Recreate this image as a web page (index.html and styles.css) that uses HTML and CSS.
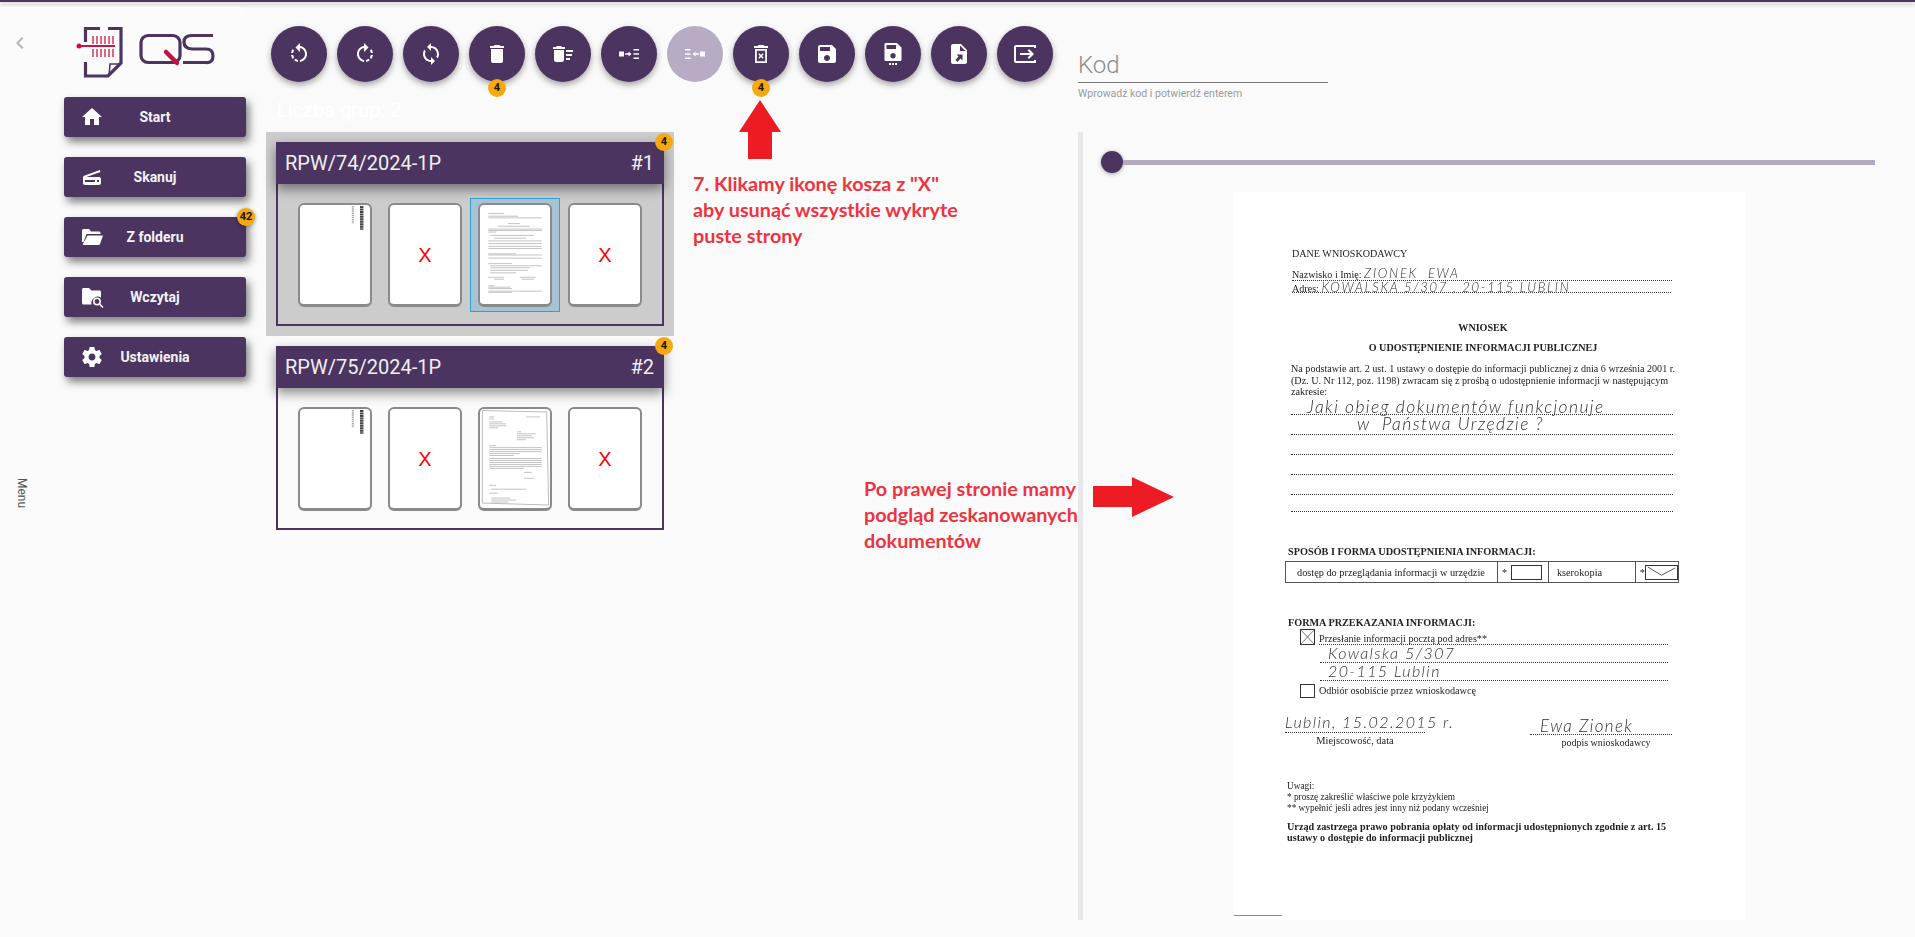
FILE: index.html
```html
<!DOCTYPE html>
<html lang="pl">

<head>
    <meta charset="UTF-8">
    <title>QS</title>
    <link rel="stylesheet" href="styles.css">
</head>

<body>
    <div class="topbar"></div>

    <div class="app">
        <!-- left menu -->
        <aside class="sidebar">
            <div class="rail">
                <svg class="chevron" viewBox="0 0 24 24"><path d="M15.41 7.41L14 6l-6 6 6 6 1.41-1.41L10.83 12z"/></svg>
                <span class="menu-label">Menu</span>
            </div>
            <div class="side-main">
                <svg class="logo" viewBox="0 0 140 52">
                    <path class="logo-line" d="M24 2.500H9.500V16M9.500 36V50H32L45 37V2.500H32"/>
                    <path class="logo-line thin" d="M33 50L34 38H45"/>
                    <path class="logo-red" d="M2 20H39"/>
                    <circle class="logo-dot" cx="3" cy="20" r="2.500"/>
                    <path class="logo-stripes" d="M17 10V18M21 10V18M25 10V18M29 10V18M33 10V18M37 10V18M17 23V31M21 23V31M25 23V31M29 23V31M33 23V31M37 23V31"/>
                    <rect class="logo-line" x="65" y="9.500" width="39" height="27" rx="7"/>
                    <path class="logo-line" d="M137 9.500H116Q108 9.500 108 16T116 23H130Q137 23 137 30T130 36.500H107"/>
                    <path class="logo-slash" d="M90 26L101 37"/>
                </svg>
                <nav class="nav">
                    <a class="nav-btn">
                        <svg class="nav-icon" viewBox="0 0 24 24"><path d="M10 20v-6h4v6h5v-8h3L12 3 2 12h3v8z"/></svg>
                        <span>Start</span>
                    </a>
                    <a class="nav-btn">
                        <svg class="nav-icon flip" viewBox="0 0 24 24"><path d="M19.800 10.700L4.200 5l-.7 1.900L17.600 12H5c-1.100 0-2 .9-2 2v4c0 1.100.9 2 2 2h14c1.100 0 2-.9 2-2v-5.500c0-.8-.5-1.600-1.200-1.800zM7 17H5v-2h2v2zm12 0H9v-2h10v2z"/></svg>
                        <span>Skanuj</span>
                    </a>
                    <a class="nav-btn">
                        <svg class="nav-icon" viewBox="0 0 24 24"><path d="M2 5.500C2 4.700 2.700 4 3.500 4H9l2 2.500h8c.8 0 1.500.7 1.500 1.500v1H6.500L3.500 17H2z"/><path d="M7.500 10.500H23l-3 8.500c-.2.600-.7 1-1.400 1H3.500c-.5 0-.8-.4-.6-.9z"/></svg>
                        <span>Z folderu</span>
                    </a>
                    <a class="nav-btn">
                        <svg class="nav-icon" viewBox="0 0 24 24"><path d="M3.500 3H9l2.500 2.500h8c.9 0 1.500.7 1.500 1.500v5.500a6.500 6.500 0 0 0-9.500 7H3.500c-.9 0-1.500-.7-1.500-1.500V4.500C2 3.700 2.600 3 3.500 3z"/><circle class="lens" cx="17" cy="16.500" r="3.200"/><path class="lens" d="M19.500 19l3.500 3.500"/></svg>
                        <span>Wczytaj</span>
                    </a>
                    <a class="nav-btn">
                        <svg class="nav-icon" viewBox="0 0 24 24"><path d="M19.430 12.980c.04-.32.07-.64.07-.98s-.03-.66-.07-.98l2.110-1.650c.19-.15.24-.42.12-.64l-2-3.460c-.12-.22-.39-.3-.61-.22l-2.490 1c-.52-.4-1.080-.73-1.690-.98l-.38-2.650C14.460 2.180 14.250 2 14 2h-4c-.25 0-.46.18-.49.42l-.38 2.650c-.61.25-1.170.59-1.690.98l-2.490-1c-.23-.09-.49 0-.61.22l-2 3.460c-.13.22-.07.49.12.64l2.110 1.650c-.04.32-.07.65-.07.98s.03.66.07.98l-2.110 1.650c-.19.15-.24.42-.12.64l2 3.460c.12.22.39.3.61.22l2.490-1c.52.4 1.080.73 1.690.98l.38 2.650c.03.24.24.42.49.42h4c.25 0 .46-.18.49-.42l.38-2.650c.61-.25 1.170-.59 1.690-.98l2.490 1c.23.09.49 0 .61-.22l2-3.460c.12-.22.07-.49-.12-.64l-2.110-1.650zM12 15.500c-1.930 0-3.500-1.570-3.500-3.500s1.570-3.500 3.500-3.500 3.500 1.570 3.500 3.500-1.570 3.500-3.500 3.500z"/></svg>
                        <span>Ustawienia</span>
                    </a>
                    <span class="badge badge-nav">42</span>
                </nav>
            </div>
        </aside>

        <main class="main">
            <!-- toolbar -->
            <div class="toolbar">
                <button class="fab"><svg viewBox="0 0 24 24"><path d="M7.110 8.530L5.700 7.110C4.800 8.270 4.240 9.610 4.070 11h2.020c.14-.87.49-1.720 1.020-2.470zM6.090 13H4.070c.17 1.390.72 2.730 1.620 3.890l1.410-1.420c-.52-.75-.87-1.590-1.010-2.470zm1.010 5.320c1.160.9 2.510 1.440 3.900 1.610V17.900c-.87-.15-1.710-.49-2.460-1.030L7.100 18.320zM13 4.070V1L8.450 5.550 13 10V6.090c2.840.48 5 2.940 5 5.910s-2.160 5.430-5 5.910v2.020c3.950-.49 7-3.850 7-7.930s-3.050-7.440-7-7.930z"/></svg></button>
                <button class="fab"><svg viewBox="0 0 24 24"><path d="M15.550 5.550L11 1v3.070C7.060 4.560 4 7.920 4 12s3.050 7.440 7 7.930v-2.020c-2.840-.48-5-2.940-5-5.910s2.160-5.430 5-5.910V10l4.550-4.450zM19.930 11c-.17-1.390-.72-2.730-1.620-3.890l-1.420 1.420c.54.75.88 1.600 1.020 2.470h2.020zM13 17.900v2.020c1.390-.17 2.740-.71 3.900-1.610l-1.440-1.440c-.75.54-1.590.89-2.460 1.030zm3.890-2.420l1.420 1.410c.9-1.160 1.450-2.500 1.620-3.890h-2.020c-.14.870-.48 1.720-1.020 2.480z"/></svg></button>
                <button class="fab"><svg viewBox="0 0 24 24"><path d="M12 4V1L8 5l4 4V6c3.310 0 6 2.690 6 6 0 1.010-.25 1.970-.7 2.800l1.460 1.460C19.540 15.030 20 13.570 20 12c0-4.420-3.580-8-8-8zm0 14c-3.310 0-6-2.690-6-6 0-1.010.25-1.970.7-2.800L5.240 7.740C4.460 8.970 4 10.430 4 12c0 4.420 3.580 8 8 8v3l4-4-4-4v3z"/></svg></button>
                <button class="fab"><svg viewBox="0 0 24 24"><path d="M6 19c0 1.100.9 2 2 2h8c1.100 0 2-.9 2-2V7H6v12zM19 4h-3.500l-1-1h-5l-1 1H5v2h14V4z"/></svg><span class="badge badge-fab">4</span></button>
                <button class="fab"><svg viewBox="0 0 24 24"><path d="M15 16h4v2h-4zm0-8h7v2h-7zm0 4h6v2h-6zM3 18c0 1.100.9 2 2 2h6c1.100 0 2-.9 2-2V8H3v10zM14 5h-3l-1-1H6L5 5H2v2h12z"/></svg></button>
                <button class="fab"><svg viewBox="0 0 24 24"><path d="M2 9.500h5v5H2zM8 11.300h3.500V9.500l3 2.500-3 2.500v-1.800H8zM16.500 7H22v1.600h-5.500zM16.500 11.200H22v1.600h-5.500zM16.500 15.400H22V17h-5.500z"/></svg></button>
                <button class="fab fab-off"><svg class="flip" viewBox="0 0 24 24"><path d="M2 9.500h5v5H2zM8 11.300h3.500V9.500l3 2.500-3 2.500v-1.800H8zM16.500 7H22v1.600h-5.500zM16.500 11.200H22v1.600h-5.500zM16.500 15.400H22V17h-5.500z"/></svg></button>
                <button class="fab"><svg viewBox="0 0 24 24"><path fill-rule="evenodd" d="M6 7h12v14H6zM7.800 8.800v10.400h8.400V8.800zM19 4h-3.500l-1-1h-5l-1 1H5v2h14z"/><path d="M9.300 10.800l1.100-1.100 1.600 1.700 1.600-1.700 1.100 1.100-1.600 1.700 1.600 1.700-1.100 1.100-1.600-1.700-1.600 1.700-1.100-1.100 1.600-1.700z" transform="translate(0 1.500)"/></svg><span class="badge badge-fab">4</span></button>
                <button class="fab"><svg viewBox="0 0 24 24"><path d="M17 3H5c-1.110 0-2 .9-2 2v14c0 1.100.89 2 2 2h14c1.100 0 2-.9 2-2V7l-4-4zm-5 16c-1.660 0-3-1.340-3-3s1.340-3 3-3 3 1.340 3 3-1.340 3-3 3zm3-10H5V5h10v4z"/></svg></button>
                <button class="fab"><svg viewBox="0 0 24 24"><path d="M16 1H5C4 1 3.500 1.500 3.500 2.500v15c0 1 .5 1.500 1.500 1.500h14c1 0 1.500-.5 1.500-1.500V5.500zM12 16.500c-1.500 0-2.700-1.200-2.700-2.700s1.200-2.700 2.700-2.700 2.700 1.200 2.700 2.700-1.200 2.700-2.700 2.700zM15 7H5.500V3H15z"/><path d="M8 21h2v2H8zM11 21h2v2h-2zM14 21h2v2h-2z"/></svg></button>
                <button class="fab"><svg viewBox="0 0 24 24"><path d="M6 2C4.900 2 4 2.900 4 4v16c0 1.100.9 2 2 2h12c1.100 0 2-.9 2-2V8l-6-6zM13 9V3.500L18.500 9z"/><path class="cut" d="M15.500 12.500v6l-2-2-3 3.500-2-2 3-3.500-2-2z"/></svg></button>
                <button class="fab"><svg viewBox="0 0 24 24"><path d="M1 5c0-1.100.9-2 2-2h20v3h-2V5H3v14h18v-1h2v3H3c-1.100 0-2-.9-2-2z"/><path d="M16 7l-1.400 1.400 2.600 2.600H7v2h10.200l-2.600 2.600L16 17l5-5z"/></svg></button>
                <div class="code-field">
                    <div class="code-value">Kod</div>
                    <div class="code-help">Wprowadź kod i potwierdź enterem</div>
                </div>
            </div>

            <div class="group-count">Liczba grup: 2</div>

            <div class="content">
                <div class="groups">
                    <section class="group group-active">
                        <div class="card">
                            <span class="badge badge-card">4</span>
                            <header class="card-head"><span>RPW/74/2024-1P</span><span>#1</span></header>
                            <div class="thumbs">
                                <div class="thumb-wrap"><div class="thumb">
                                    <svg class="mini" viewBox="0 0 70 100"><path stroke="#aaa" stroke-width="2" stroke-dasharray="1.500 .7" d="M53 1V19"/><path stroke="#444" stroke-width="3.500" stroke-dasharray="2 .5" d="M62 1V25"/></svg>
                                </div></div>
                                <div class="thumb-wrap"><div class="thumb thumb-x">X</div></div>
                                <div class="thumb-wrap thumb-selected"><div class="thumb">
                                    <svg class="mini" viewBox="0 0 70 100"><path stroke="#999" stroke-width=".6" d="M8 8.500H24M8 11.300H38M8 13H62M28 18.800H40M18 21.500H50M8 24.300H62M8 25.800H62M8 27.300H16M10 30.700H54M14 33.500H46M8 36.300H62M8 39H62M8 41.800H62M8 44H62M8 49.300H36M8 50.500H62M8 53.700H62M8 59.200H32M10 61.400H62M10 63.400H50M10 66H48M10 68.500H36M8 73H24M40 73H56M14 75H24M42 75H54M8 81.500H14M8 83H30M8 84.500H32M8 87H62M8 88.300H32"/></svg>
                                </div></div>
                                <div class="thumb-wrap"><div class="thumb thumb-x">X</div></div>
                            </div>
                        </div>
                    </section>
                    <section class="group">
                        <div class="card">
                            <span class="badge badge-card">4</span>
                            <header class="card-head"><span>RPW/75/2024-1P</span><span>#2</span></header>
                            <div class="thumbs">
                                <div class="thumb-wrap"><div class="thumb">
                                    <svg class="mini" viewBox="0 0 70 100"><path stroke="#aaa" stroke-width="2" stroke-dasharray="1.500 .7" d="M53 1V19"/><path stroke="#444" stroke-width="3.500" stroke-dasharray="2 .5" d="M62 1V25"/></svg>
                                </div></div>
                                <div class="thumb-wrap"><div class="thumb thumb-x">X</div></div>
                                <div class="thumb-wrap"><div class="thumb">
                                    <svg class="mini" viewBox="0 0 70 100"><path fill="none" stroke="#aaa" stroke-width=".8" d="M2 1.500L67 3 69 97 2 95z"/><path stroke="#999" stroke-width=".6" d="M9 8H14M46 8H60M9 10H14M9 13H22M9 15H26M9 17H26M9 19H18M37 23H41M37 25H56M37 27H52M37 29H54M37 31H46M9 37H16M9 39H62M9 41H62M9 43H62M9 45H40M9 47H34M9 50H62M9 52H62M9 54H62M9 56H62M9 58H62M9 60H44M44 64H52M44 70H54M9 77H16M11 81H46M9 85H18M11 90H30M11 92H36M11 94H28"/></svg>
                                </div></div>
                                <div class="thumb-wrap"><div class="thumb thumb-x">X</div></div>
                            </div>
                        </div>
                    </section>
                </div>

                <!-- document preview -->
                <div class="viewer">
                    <div class="slider"><span class="slider-thumb"></span><span class="slider-track"></span></div>
                    <div class="doc">
                        <div>DANE WNIOSKODAWCY</div>
                        <div class="dots name-row">Nazwisko i Imię: <span class="hand caps">ZIONEK&nbsp; EWA</span></div>
                        <div class="dots addr-row">Adres: <span class="hand caps">KOWALSKA 5/307 , 20-115 LUBLIN</span></div>
                        <div class="doc-title wniosek">WNIOSEK</div>
                        <div class="doc-title udost">O UDOSTĘPNIENIE INFORMACJI PUBLICZNEJ</div>
                        <div class="para">Na podstawie art. 2 ust. 1 ustawy o dostępie do informacji publicznej z dnia 6 września 2001 r.<br>(Dz. U. Nr 112, poz. 1198) zwracam się z prośbą o udostępnienie informacji w następującym<br>zakresie:</div>
                        <div class="dots write-row first"><span class="hand script big">Jaki obieg dokumentów funkcjonuje</span></div>
                        <div class="dots write-row"><span class="hand script big second">w&nbsp; Państwa Urzędzie ?</span></div>
                        <div class="dots write-row"></div>
                        <div class="dots write-row"></div>
                        <div class="dots write-row"></div>
                        <div class="dots write-row last"></div>

                        <div class="doc-head sposob">SPOSÓB I FORMA UDOSTĘPNIENIA INFORMACJI:</div>
                        <div class="doc-table">
                            <div class="cell cell-wide">dostęp do przeglądania informacji w urzędzie</div>
                            <div class="cell cell-box">* <span class="check"></span></div>
                            <div class="cell cell-copy">kserokopia</div>
                            <div class="cell cell-end">*<span class="check check-x"><svg viewBox="0 0 34 14"><path d="M2 1L17 10 32 2"/></svg></span></div>
                        </div>

                        <div class="doc-head forma">FORMA PRZEKAZANIA INFORMACJI:</div>
                        <div class="opt opt-mail"><span class="opt-box"><svg viewBox="0 0 15 16"><path d="M0 0L15 16M15 0L0 16"/></svg></span><span class="dots opt-line">Przesłanie informacji pocztą pod adres**</span></div>
                        <div class="dots addr-line"><span class="hand script">Kowalska 5/307</span></div>
                        <div class="dots addr-line"><span class="hand script">20-115 Lublin</span></div>
                        <div class="opt opt-self"><span class="opt-box"></span><span>Odbiór osobiście przez wnioskodawcę</span></div>

                        <div class="signs">
                            <div class="sign-left"><div class="dots sign-line"><span class="hand script">Lublin, 15.02.2015 r.</span></div><div class="sign-cap">Miejscowość, data</div></div>
                            <div class="sign-right"><div class="dots sign-line"><span class="hand script">Ewa Zionek</span></div><div class="sign-cap">podpis wnioskodawcy</div></div>
                        </div>

                        <div class="doc-small">Uwagi:<br>* proszę zakreślić właściwe pole krzyżykiem<br>** wypełnić jeśli adres jest inny niż podany wcześniej</div>
                        <div class="doc-note">Urząd zastrzega prawo pobrania opłaty od informacji udostępnionych zgodnie z art. 15<br>ustawy o dostępie do informacji publicznej</div>
                        <div class="doc-smudge"></div>
                    </div>
                </div>
            </div>
        </main>
    </div>

    <!-- annotations drawn on top of the screenshot -->
    <svg class="arrow arrow-up" viewBox="0 0 42 59"><path d="M21 0L42 32H33V59H9V32H0z"/></svg>
    <p class="note note-top">7. Klikamy ikonę kosza z "X"<br>aby usunąć wszystkie wykryte<br>puste strony</p>
    <p class="note note-side">Po prawej stronie mamy<br>podgląd zeskanowanych<br>dokumentów</p>
    <svg class="arrow arrow-right" viewBox="0 0 81 40"><path d="M0 9H39V0L81 20 39 40V30H0z"/></svg>
</body>

</html>
```

FILE: styles.css
```css
* {
    box-sizing: border-box;
}

html,
body {
    height: 100%;
}

body {
    margin: 0;
    background-color: #fafafa;
    font-family: Roboto, sans-serif;
    overflow: hidden;
    position: relative;
}

.topbar {
    height: 2px;
    margin-bottom: 5px;
    background-color: #4b3560;
    box-shadow: 0 2px 5px rgba(0, 0, 0, 0.3);
}

.app {
    display: flex;
    height: 930px;
}

/* sidebar */
.sidebar {
    display: flex;
    width: 246px;
    flex-shrink: 0;
    background-color: #fbfbfb;
    position: relative;
}

.rail {
    width: 64px;
    display: flex;
    flex-direction: column;
    padding: 24px 0 0 8px;
}

.chevron {
    width: 24px;
    height: 24px;
    fill: #b5b5b5;
}

.menu-label {
    align-self: flex-start;
    writing-mode: vertical-rl;
    font-size: 12px;
    line-height: 16px;
    margin: 423px 0 0 6px;
    color: #555;
}

.side-main {
    width: 182px;
}

.logo {
    display: block;
    width: 140px;
    height: 52px;
    margin: 19px 0 19px 12px;
}

.logo-line {
    fill: none;
    stroke: #4b3560;
    stroke-width: 3.200;
}

.logo-line.thin {
    stroke-width: 1.500;
}

.logo-red {
    fill: none;
    stroke: #c9123f;
    stroke-width: 2;
}

.logo-dot {
    fill: #c9123f;
}

.logo-stripes {
    fill: none;
    stroke: #d2395f;
    stroke-width: 1.500;
}

.logo-slash {
    fill: none;
    stroke: #c9123f;
    stroke-width: 4.500;
    stroke-linecap: round;
}

.nav {
    display: flex;
    flex-direction: column;
    gap: 20px;
    position: relative;
}

.nav-btn {
    display: flex;
    align-items: center;
    justify-content: center;
    height: 40px;
    border-radius: 3px;
    background-color: #4b3560;
    color: #f4f2f6;
    font-size: 14px;
    font-weight: 700;
    box-shadow: 3px 5px 9px rgba(0, 0, 0, 0.5);
    position: relative;
}

.nav-icon {
    width: 24px;
    height: 24px;
    fill: #fff;
    position: absolute;
    left: 16px;
    top: 8px;
}

.lens {
    fill: #4b3560;
    stroke: #fff;
    stroke-width: 1.500;
}

.flip {
    transform: scaleX(-1);
}

.badge {
    position: absolute;
    width: 18px;
    height: 18px;
    border-radius: 50%;
    background-color: #f5a80f;
    color: #1c1408;
    font-family: Roboto, sans-serif;
    font-size: 11px;
    font-weight: 700;
    line-height: 18px;
    text-align: center;
}

.badge-nav {
    top: 111px;
    right: -9px;
    box-shadow: 0 1px 4px rgba(0, 0, 0, 0.4);
}

.badge-fab {
    left: 19px;
    bottom: -15px;
}

.badge-card {
    top: -11px;
    right: -11px;
    z-index: 2;
}

/* main */
.main {
    flex: 1;
    min-width: 0;
}

.toolbar {
    display: flex;
    gap: 10px;
    padding: 19px 0 0 25px;
    height: 75px;
}

.fab {
    position: relative;
    width: 56px;
    height: 56px;
    padding: 16px;
    border: none;
    border-radius: 50%;
    background-color: #4b3560;
    box-shadow: 0 3px 6px rgba(0, 0, 0, 0.35);
}

.fab svg {
    display: block;
    width: 24px;
    height: 24px;
    fill: #fff;
}

.fab .cut {
    fill: #4b3560;
}

.fab-off {
    background-color: #b7acc3;
    box-shadow: none;
}

.code-field {
    width: 250px;
    margin: 18px 0 0 15px;
}

.code-value {
    height: 39px;
    border-bottom: 1px solid #777;
    color: #8c8c8c;
    font-size: 24px;
    font-weight: 300;
    line-height: 43px;
}

.code-help {
    margin-top: 4px;
    color: #9a9a9a;
    font-size: 10.500px;
    line-height: 13px;
}

.group-count {
    height: 34px;
    margin-top: 16px;
    padding-left: 31px;
    color: #fff;
    font-size: 20px;
    line-height: 24px;
}

.content {
    display: flex;
}

.groups {
    width: 408px;
    margin-left: 20px;
}

.group {
    padding: 10px;
    height: 204px;
}

.group-active {
    background-color: #cccccc;
}

.card {
    position: relative;
    height: 184px;
    border: 2px solid #4b3560;
}

.card-head {
    display: flex;
    justify-content: space-between;
    align-items: center;
    height: 42px;
    margin: -2px -2px 0;
    padding: 0 10px 0 9px;
    background-color: #4b3560;
    color: #f0eef2;
    font-size: 20px;
    box-shadow: 0 5px 11px rgba(0, 0, 0, 0.45);
}

.thumbs {
    display: flex;
    padding: 14px 0 0 12px;
}

.thumb-wrap {
    width: 90px;
    height: 114px;
    padding: 5px 8px;
    border: 1px solid transparent;
}

.thumb-selected {
    border-color: #2f9fd6;
    background-color: #a5c3d3;
}

.thumb {
    height: 104px;
    margin: -1px -1px 0;
    width: 74px;
    background-color: #fff;
    border: 2px solid #8a8a8a;
    border-bottom-width: 3px;
    border-radius: 6px;
    overflow: hidden;
}

.thumb-x {
    color: #ff0000;
    font-family: "Liberation Sans", sans-serif;
    font-size: 20px;
    line-height: 101px;
    text-align: center;
}

.mini {
    display: block;
    width: 70px;
    height: 99px;
    filter: blur(0.4px);
}

/* preview */
.viewer {
    width: 837px;
    height: 788px;
    margin-left: 404px;
    border-left: 5px solid #e8e8e8;
}

.slider {
    display: flex;
    align-items: center;
    height: 60px;
    padding: 0 40px 0 18px;
}

.slider-thumb {
    width: 22px;
    height: 22px;
    border-radius: 50%;
    background-color: #4b3560;
    box-shadow: 0 1px 4px rgba(0, 0, 0, 0.35);
}

.slider-track {
    flex: 1;
    height: 5px;
    background-color: #b5a9c0;
}

.doc {
    position: relative;
    width: 511px;
    height: 728px;
    margin-left: 151px;
    padding: 55px 0 0 58px;
    background-color: #fff;
    color: #222;
    font-family: "Liberation Serif", serif;
    font-size: 10.100px;
    line-height: 14px;
    white-space: nowrap;
    filter: blur(0.25px);
}

.dots {
    border-bottom: 1px dotted #333;
}

.name-row {
    width: 380px;
    margin-top: 5px;
    height: 15px;
    line-height: 15px;
}

.addr-row {
    width: 379px;
    height: 12px;
    line-height: 12px;
}

.hand {
    font-family: Lato, sans-serif;
    font-weight: 300;
    color: #2e2e2e;
}

.caps {
    font-size: 13px;
    letter-spacing: 1.700px;
    font-style: italic;
}

.script {
    font-size: 16px;
    font-style: italic;
    letter-spacing: 1.400px;
}

.big {
    font-size: 17.500px;
}

.doc-title {
    font-weight: 700;
    font-size: 10.100px;
    text-align: center;
    width: 382px;
}

.wniosek {
    margin-top: 28px;
}

.udost {
    margin-top: 6px;
}

.para {
    margin: 8px 0 0 -1px;
    line-height: 11.500px;
    font-size: 10.150px;
}

.write-row {
    width: 382px;
    height: 20px;
    margin-left: -1px;
    line-height: 17px;
    padding-left: 16px;
}

.write-row.first {
    height: 17.500px;
}

.write-row.last {
    height: 17px;
}

.second {
    margin-left: 50px;
}

.doc-head {
    font-weight: 700;
}

.sposob {
    margin: 33px 0 0 -4px;
    font-size: 10.250px;
}

.doc-table {
    display: flex;
    width: 394px;
    height: 22px;
    margin: 2px 0 0 -7px;
    border: 1px solid #555;
    font-size: 10.300px;
    line-height: 19px;
}

.cell {
    border-right: 1px solid #555;
    display: flex;
    align-items: center;
}

.cell-wide {
    width: 212px;
    padding-left: 11px;
}

.cell-box {
    width: 51px;
    padding-left: 4px;
    gap: 4px;
}

.cell-copy {
    width: 87px;
    padding-left: 8px;
}

.cell-end {
    border-right: none;
    padding-left: 4px;
    flex: 1;
}

.check {
    display: block;
    width: 31px;
    height: 15px;
    border: 1px solid #333;
}

.check-x {
    width: 33px;
}

.check-x svg {
    display: block;
    width: 100%;
    height: 100%;
    fill: none;
    stroke: #444;
    stroke-width: 1;
}

.forma {
    margin: 33px 0 0 -4px;
    font-size: 10.200px;
}

.opt {
    display: flex;
    gap: 4px;
    margin-left: 8px;
    font-size: 10.200px;
}

.opt-mail {
    height: 16px;
    margin-top: -1px;
}

.opt-box {
    display: block;
    width: 15px;
    height: 100%;
    border: 1px solid #333;
    flex-shrink: 0;
}

.opt-box svg {
    display: block;
    width: 100%;
    height: 100%;
    fill: none;
    stroke: #444;
    stroke-width: 0.8;
}

.opt-line {
    flex: 0 0 349px;
    padding-top: 3px;
}

.addr-line {
    width: 348px;
    margin-left: 28px;
    height: 18px;
    line-height: 16px;
    padding-left: 8px;
}

.opt-self {
    height: 14px;
    margin-top: 3px;
}

.signs {
    display: flex;
    justify-content: space-between;
    width: 387px;
    margin: 15px 0 0 -7px;
}

.sign-line {
    height: 20px;
    line-height: 18px;
}

.sign-left {
    width: 140px;
    font-size: 10.400px;
}

.sign-right {
    width: 142px;
    margin-top: 7px;
    font-size: 10px;
}

.sign-right .sign-line {
    height: 15px;
    line-height: 12px;
    padding-left: 10px;
}

.sign-right .script {
    font-size: 17px;
}

.sign-cap {
    text-align: center;
    margin-top: 1px;
}

.sign-right .sign-cap {
    padding-left: 10px;
}

.doc-small {
    margin: 31px 0 0 -5px;
    font-size: 9.300px;
    line-height: 11px;
}

.doc-note {
    margin: 6.500px 0 0 -5px;
    font-weight: 700;
    font-size: 10.200px;
    line-height: 11px;
}

.doc-smudge {
    position: absolute;
    left: 0;
    bottom: 4px;
    width: 48px;
    height: 1px;
    background-color: #888;
}

/* annotations */
.arrow {
    position: absolute;
    fill: #ed1c24;
}

.arrow-up {
    left: 739px;
    top: 100px;
    width: 42px;
    height: 59px;
}

.arrow-right {
    left: 1093px;
    top: 477px;
    width: 81px;
    height: 40px;
}

.note {
    position: absolute;
    margin: 0;
    color: #ee3340;
    font-family: Lato, sans-serif;
    font-size: 19.800px;
    font-weight: 700;
    line-height: 26px;
    white-space: nowrap;
}

.note-top {
    left: 693px;
    top: 170px;
}

.note-side {
    left: 864px;
    top: 475px;
}
```
